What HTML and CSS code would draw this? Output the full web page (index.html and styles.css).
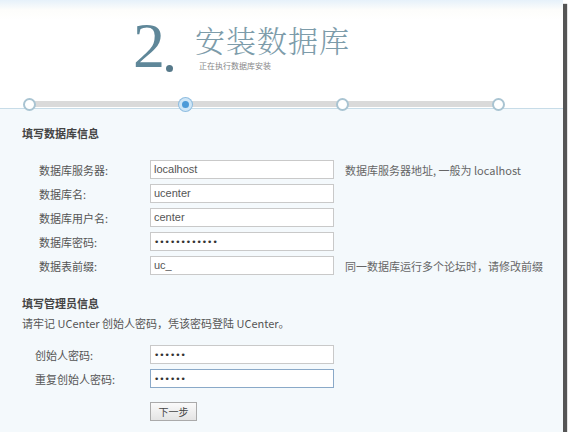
FILE: index.html
```html
<!DOCTYPE html>
<html>
<head>
    <title>安装数据库</title>
    <link rel="stylesheet" href="styles.css">
</head>
<body>
    <div class="frame">
        <div class="header">
            <div class="step-num">2<span class="dot"></span></div>
            <div class="step-title">
                <h1>安装数据库</h1>
                <p>正在执行数据库安装</p>
            </div>
        </div>

        <div class="steps">
            <div class="track">
                <span class="node"></span>
                <span class="node active"></span>
                <span class="node"></span>
                <span class="node"></span>
            </div>
        </div>

        <div class="main">
            <h3>填写数据库信息</h3>
            <div class="rows">
                <div class="row">
                    <label>数据库服务器:</label>
                    <input type="text" value="localhost">
                    <span class="hint">数据库服务器地址, 一般为 localhost</span>
                </div>
                <div class="row">
                    <label>数据库名:</label>
                    <input type="text" value="ucenter">
                </div>
                <div class="row">
                    <label>数据库用户名:</label>
                    <input type="text" value="center">
                </div>
                <div class="row">
                    <label>数据库密码:</label>
                    <input type="password" value="************">
                </div>
                <div class="row">
                    <label>数据表前缀:</label>
                    <input type="text" value="uc_">
                    <span class="hint">同一数据库运行多个论坛时，请修改前缀</span>
                </div>
            </div>

            <h3 class="second">填写管理员信息</h3>
            <p class="note">请牢记 UCenter 创始人密码，凭该密码登陆 UCenter。</p>
            <div class="rows admin">
                <div class="row">
                    <label>创始人密码:</label>
                    <input type="password" value="******">
                </div>
                <div class="row">
                    <label>重复创始人密码:</label>
                    <input type="password" value="******" class="focus">
                </div>
            </div>
            <div class="actions">
                <button type="button">下一步</button>
            </div>
        </div>
    </div>
</body>
</html>
```

FILE: styles.css
```css
body {
    margin: 0;
    background: #fff;
    font-family: "Noto Sans CJK SC", "DejaVu Sans", sans-serif;
    font-size: 11px;
    color: #555;
}
.frame {
    width: 563px;
    height: 432px;
    background: #f4f9fc;
    box-shadow: 4px 4px 1px #555;
    overflow: hidden;
}
.header {
    height: 97px;
    background: linear-gradient(#e6f1fa, #fdfdfb 10px, #fff 20px);
    display: flex;
    align-items: flex-start;
    padding-left: 133px;
    box-sizing: border-box;
    padding-top: 18px;
}
.step-num {
    font-family: "Liberation Serif", "DejaVu Serif", serif;
    font-size: 64px;
    line-height: 56px;
    height: 56px;
    color: #5f8799;
    position: relative;
    width: 62px;
}
.step-num .dot {
    position: absolute;
    left: 33px;
    bottom: 2px;
    width: 7px;
    height: 7px;
    border-radius: 50%;
    background: #56798a;
}
.step-title h1 {
    margin: 4px 0 0 0;
    font-family: "Noto Serif CJK SC", "Noto Sans CJK SC", serif;
    font-weight: 300;
    font-size: 30px;
    line-height: 34px;
    color: #7d9caa;
    letter-spacing: 1px;
}
.step-title p {
    margin: 4px 0 0 4px;
    font-size: 8px;
    color: #888;
}
.steps {
    height: 11px;
    background: #fff;
    border-bottom: 1px solid #c7dce8;
    position: relative;
}
.track {
    position: absolute;
    left: 23px;
    width: 482px;
    top: 0;
    height: 14px;
    display: flex;
    justify-content: space-between;
    align-items: center;
}
.track::before {
    content: "";
    position: absolute;
    left: 6px;
    right: 6px;
    top: 4px;
    height: 6px;
    background: #dadada;
}
.node {
    position: relative;
    width: 9px;
    height: 9px;
    border: 2px solid #a9c4d2;
    border-radius: 50%;
    background: #fff;
}
.node.active {
    width: 7px;
    height: 7px;
    border: 3px solid #cfe6f7;
    background: #4d9ad8;
    box-shadow: 0 0 0 1px #8fbde0;
}
.main {
    padding: 16px 0 0 22px;
}
h3 {
    margin: 0;
    font-size: 11px;
    font-weight: bold;
    color: #444;
}
.rows {
    margin-top: 19px;
    display: flex;
    flex-direction: column;
    gap: 5px;
}
.row {
    display: flex;
    align-items: center;
    height: 19px;
}
.row label {
    width: 111px;
    padding-left: 17px;
    color: #555;
}
.row input {
    width: 184px;
    height: 19px;
    box-sizing: border-box;
    border: 1px solid #c9c9c9;
    background: #fff;
    padding: 0 3px 1px;
    font-family: "Liberation Sans", Arial, sans-serif;
    font-size: 11px;
    line-height: normal;
    color: #555;
    margin: 0;
}
.row input[type=password] {
    font-family: "DejaVu Sans", sans-serif;
    font-size: 9px;
    color: #333;
    padding-bottom: 0;
}
.row input.focus {
    border-color: #8aa9c8;
}
.hint {
    margin-left: 11px;
    color: #666;
}
h3.second {
    margin-top: 20px;
}
.note {
    margin: 4px 0 0 0;
    color: #555;
}
.rows.admin {
    margin-top: 14px;
}
.rows.admin .row label {
    padding-left: 13px;
    width: 115px;
}
.actions {
    padding: 14px 0 0 128px;
}
button {
    width: 47px;
    height: 19px;
    border: 1px solid #aaa;
    background: linear-gradient(#fafafa, #e4e4e4);
    font-family: "Noto Sans CJK SC", sans-serif;
    font-size: 10px;
    color: #444;
    padding: 0;
}
```
